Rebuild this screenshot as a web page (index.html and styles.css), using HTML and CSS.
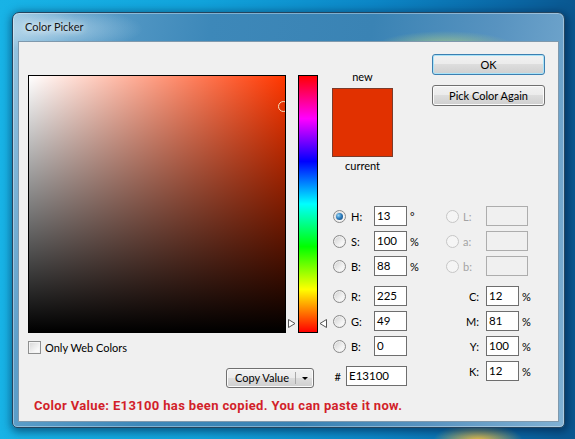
FILE: index.html
```html
<!DOCTYPE html>
<html>
<head>
<meta charset="utf-8">
<title>Color Picker</title>
<link rel="stylesheet" href="styles.css">
</head>
<body>
<div class="window">
  <div class="titlebar">Color Picker</div>
  <div class="client">
    <div class="main">
      <div class="left">
        <div class="pickers">
          <div class="field"><div class="marker"></div></div>
          <div class="hue">
            <svg class="arr arr-l" width="8" height="9" viewBox="0 0 8 9"><path d="M0.5 0.5 L7 4.5 L0.5 8.5 Z" fill="#fff" stroke="#555"/></svg>
            <svg class="arr arr-r" width="8" height="9" viewBox="0 0 8 9"><path d="M7.5 0.5 L1 4.5 L7.5 8.5 Z" fill="#fff" stroke="#555"/></svg>
          </div>
        </div>
        <div class="check"><span class="box"></span><span>Only Web Colors</span></div>
        <div class="split"><span class="split-label">Copy Value</span><span class="split-drop"><span class="tri"></span></span></div>
      </div>
      <div class="right">
        <div class="top">
          <div class="swatch-col">
            <div class="cap">new</div>
            <div class="swatch"></div>
            <div class="cap">current</div>
          </div>
          <div class="btns">
            <div class="btn default">OK</div>
            <div class="btn">Pick Color Again</div>
          </div>
        </div>
        <div class="grid">
          <span class="radio on"></span><span class="lbl">H:</span><span class="inp">13</span><span class="unit deg">°</span>
          <span class="radio r2 dis"></span><span class="lbl2 dis">L:</span><span class="inp wide dis"></span>
          <span class="radio"></span><span class="lbl">S:</span><span class="inp">100</span><span class="unit">%</span>
          <span class="radio r2 dis"></span><span class="lbl2 dis">a:</span><span class="inp wide dis"></span>
          <span class="radio"></span><span class="lbl">B:</span><span class="inp">88</span><span class="unit">%</span>
          <span class="radio r2 dis"></span><span class="lbl2 dis">b:</span><span class="inp wide dis"></span>
        </div>
        <div class="grid rgb">
          <span class="radio"></span><span class="lbl">R:</span><span class="inp">225</span>
          <span class="clbl">C:</span><span class="cinp"><span class="inp">12</span><span>%</span></span>
          <span class="radio"></span><span class="lbl">G:</span><span class="inp">49</span>
          <span class="clbl">M:</span><span class="cinp"><span class="inp">81</span><span>%</span></span>
          <span class="radio"></span><span class="lbl">B:</span><span class="inp">0</span>
          <span class="clbl">Y:</span><span class="cinp"><span class="inp">100</span><span>%</span></span>
          <span class="hex"><span>#</span><span class="inp hexinp">E13100</span></span>
          <span class="clbl">K:</span><span class="cinp"><span class="inp">12</span><span>%</span></span>
        </div>
      </div>
    </div>
    <div class="msg">Color Value: E13100 has been copied. You can paste it now.</div>
  </div>
</div>
</body>
</html>
```
FILE: styles.css
```css
* { box-sizing: border-box; }
html, body { margin: 0; width: 575px; height: 439px; overflow: hidden; }
body {
  font-family: Lato, "Liberation Sans", sans-serif;
  font-size: 11px;
  color: #000;
  padding: 12px 0 0 12px;
  background:
    radial-gradient(ellipse 45px 18px at 478px 441px, rgba(255, 196, 60, 0.95), rgba(255, 196, 60, 0) 100%),
    linear-gradient(90deg, #18b3e6 0%, #11a3db 35%, #0c86c6 65%, #0a68a6 88%, #0a5790 100%);
}
.window {
  width: 553px;
  height: 416px;
  border: 1px solid #24455f;
  border-radius: 7px 7px 5px 5px;
  padding: 0 5px 5px 5px;
  display: flex;
  flex-direction: column;
  background:
    radial-gradient(ellipse 70px 16px at 432px 34px, rgba(186, 214, 126, 0.75), rgba(186, 214, 126, 0) 100%),
    radial-gradient(ellipse 90px 22px at 40px 16px, rgba(220, 238, 248, 0.55), rgba(220, 238, 248, 0) 100%),
    linear-gradient(100deg, #9cc8e2 0%, #5d9fca 10%, #3d88b9 32%, #3a83b4 58%, #5893c0 78%, #80b1d4 100%);
  box-shadow: 1px 2px 9px 2px rgba(0, 25, 60, 0.55), inset 0 0 0 1px rgba(255, 255, 255, 0.35);
}
.titlebar {
  height: 28px;
  line-height: 28px;
  padding-left: 7px;
  font-size: 11px;
  color: #151515;
  text-shadow: 0 0 6px rgba(255, 255, 255, 0.95), 0 0 12px rgba(255, 255, 255, 0.7);
}
.client {
  width: 541px;
  height: 381px;
  border: 1px solid #7f99ad;
  background: #f0f0f0;
  display: flex;
  flex-direction: column;
}
.main { display: flex; padding-left: 9px; }
.left { width: 290px; padding-top: 33px; display: flex; flex-direction: column; }
.pickers { display: flex; gap: 12px; height: 258px; }
.field {
  position: relative;
  width: 258px;
  height: 258px;
  border: 1px solid #000;
  overflow: hidden;
  background:
    linear-gradient(to bottom, rgba(0, 0, 0, 0), #000),
    linear-gradient(to right, #fff, rgb(255, 55, 0));
}
.marker {
  position: absolute;
  left: 249px;
  top: 25px;
  width: 11px;
  height: 11px;
  border-radius: 50%;
  border: 1px solid #f4e4c2;
}
.hue {
  position: relative;
  width: 20px;
  height: 258px;
  border: 1px solid #000;
  background: linear-gradient(to bottom, #f00 0%, #f0f 16.67%, #00f 33.33%, #0ff 50%, #0f0 66.67%, #ff0 83.33%, #f00 100%);
}
.arr { position: absolute; top: 243px; display: block; }
.arr-l { left: -11px; }
.arr-r { left: 20px; }
.check { display: flex; align-items: center; gap: 4px; margin-top: 8px; height: 13px; }
.box {
  width: 13px;
  height: 13px;
  border: 1px solid #8e8f8f;
  background: linear-gradient(135deg, #d6d6d6, #f6f6f6 70%, #fdfdfd);
  box-shadow: inset 0 0 0 1px #f3f3f3;
}
.split {
  align-self: flex-end;
  margin-right: 4px;
  margin-top: 14px;
  width: 88px;
  height: 20px;
  display: flex;
  border: 1px solid #707070;
  border-radius: 3px;
  background: linear-gradient(#f2f2f2 0%, #ebebeb 50%, #dddddd 50%, #cfcfcf 100%);
  box-shadow: inset 0 0 0 1px #fbfbfb;
}
.split-label { width: 68px; text-align: center; line-height: 18px; padding-left: 2px; }
.split-drop {
  flex: 1;
  display: flex;
  align-items: center;
  justify-content: center;
  border-left: 1px solid #a8a8a8;
  margin: 3px 0;
}
.tri { width: 0; height: 0; border-left: 3px solid transparent; border-right: 3px solid transparent; border-top: 3px solid #000; }
.msg {
  margin-top: 10px;
  padding-left: 15px;
  font-family: Roboto, "Liberation Sans", sans-serif;
  font-weight: 700;
  font-size: 13px;
  letter-spacing: 0.35px;
  line-height: 16px;
  color: #d21f2a;
}
.right { margin-left: 14px; display: flex; flex-direction: column; }
.top { display: flex; height: 164px; }
.swatch-col { width: 61px; display: flex; flex-direction: column; align-items: center; padding-top: 27px; }
.cap { height: 15px; line-height: 15px; }
.swatch { width: 61px; height: 69px; margin: 4px 0 1px; border: 1px solid #7b3b2b; background: #e13100; }
.btns { margin-left: 39px; padding-top: 12px; width: 113px; display: flex; flex-direction: column; gap: 10px; }
.btn {
  height: 21px;
  line-height: 19px;
  text-align: center;
  border: 1px solid #707070;
  border-radius: 3px;
  background: linear-gradient(#f2f2f2 0%, #ebebeb 50%, #dddddd 50%, #cfcfcf 100%);
  box-shadow: inset 0 0 0 1px #fbfbfb;
}
.btn.default { border-color: #3c7fb1; box-shadow: inset 0 0 0 1px #a9e3f8; }
.grid {
  display: grid;
  grid-template-columns: 14px 28px 33px 39px 14px 26px 42px auto;
  grid-auto-rows: 20px;
  row-gap: 5px;
  align-items: center;
}
.rgb { margin-top: 10px; }
.radio {
  grid-column: 1;
  position: relative;
  width: 13px;
  height: 13px;
  margin-left: 1px;
  border-radius: 50%;
  border: 1px solid #8a8a8a;
  background: linear-gradient(135deg, #cfcfcf, #f4f4f4 65%, #ffffff);
  box-shadow: inset 0 0 0 1px #efefef;
}
.radio.r2 { grid-column: 5; margin-left: 0; }
.radio.on::after {
  content: "";
  position: absolute;
  left: 2px;
  top: 2px;
  width: 7px;
  height: 7px;
  border-radius: 50%;
  background: radial-gradient(circle at 35% 35%, #9ad7f7, #2f7fbf 45%, #0e3c6e 100%);
}
.radio.dis { border-color: #c6c6c6; background: #f5f5f5; box-shadow: none; }
.lbl { padding-left: 5px; }
.lbl2 { padding-left: 3px; }
.lbl2.dis { color: #a3a3a3; }
.unit { padding-left: 3px; }
.inp {
  display: block;
  width: 33px;
  height: 20px;
  border: 1px solid #6e6e6e;
  background: #fff;
  padding-left: 2px;
  line-height: 18px;
  font-size: 11.5px;
}
.inp.wide { width: 42px; }
.inp.dis { border-color: #adadad; background: #f0f0f0; }
.clbl { grid-column: 5 / 7; text-align: right; padding-right: 7px; }
.cinp { grid-column: 7 / 9; display: flex; align-items: center; gap: 3px; }
.hex {
  grid-column: 1 / 4;
  align-self: start;
  margin-top: 5px;
  display: flex;
  justify-content: flex-end;
  align-items: center;
  gap: 5px;
}
.inp.hexinp { width: 61px; }
```
